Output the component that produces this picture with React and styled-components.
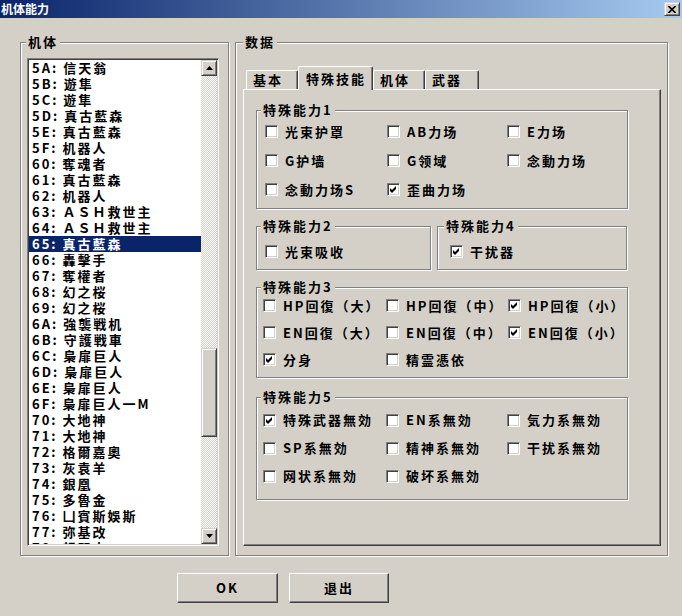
import styled, { createGlobalStyle } from "styled-components"

const GlobalStyle = createGlobalStyle`
    body {
        margin: 0;
        overflow: hidden;
        background: #d4d0c8;
    }
`

const Page = styled.div`
    display: flex;
    flex-direction: column;
    width: 682px;
    height: 616px;
    background: #d4d0c8;
    color: #000;
    font-family: "Noto Sans CJK SC", "Liberation Sans", sans-serif;
    font-weight: 700;
    font-size: 13px;
    line-height: 16px;
    letter-spacing: 2px;
`

const TitleBar = styled.div`
    display: flex;
    align-items: center;
    justify-content: space-between;
    height: 18px;
    padding: 0 2px 0 1px;
    background: linear-gradient(to right, #0a246a, #a6caf0);
    color: #fff;
    font-size: 12px;
    letter-spacing: 0;
`

const raised = `
    border: 1px solid;
    border-color: #d4d0c8 #404040 #404040 #d4d0c8;
    box-shadow: inset 1px 1px #fff, inset -1px -1px #808080;
    background: #d4d0c8;
`

const CloseBtn = styled.div`
    ${raised}
    box-sizing: border-box;
    display: flex;
    align-items: center;
    justify-content: center;
    width: 16px;
    height: 14px;
`

const Main = styled.div`
    display: flex;
    gap: 6px;
    padding: 24px 0 0 20px;
`

const GroupBox = styled.div`
    position: relative;
    box-sizing: border-box;
    width: ${p => p.$w}px;
    height: ${p => p.$h}px;
    margin-top: ${p => p.$mt || 0}px;
    border: 1px solid #808080;
    box-shadow: inset 1px 1px #fff, 1px 1px #fff;
    padding: ${p => p.$pad || "0"};
    flex-shrink: 0;
`

const Legend = styled.span`
    position: absolute;
    top: -9px;
    left: ${p => p.$lx}px;
    padding: 0 2px;
    background: #d4d0c8;
    line-height: 16px;
`

const ListBox = styled.div`
    box-sizing: border-box;
    display: flex;
    width: 192px;
    height: 488px;
    border: 1px solid;
    border-color: #808080 #fff #fff #808080;
    box-shadow: inset 1px 1px #404040, inset -1px -1px #d4d0c8;
    background: #fff;
    padding: 1px;
`

const Rows = styled.div`
    flex: 1;
    display: flex;
    flex-direction: column;
    overflow: hidden;
`

const Row = styled.div`
    flex-shrink: 0;
    height: 16px;
    line-height: 16px;
    padding-left: 3px;
    white-space: nowrap;
    background: ${p => (p.$sel ? "#0a246a" : "transparent")};
    color: ${p => (p.$sel ? "#fff" : "#000")};
`

const ScrollBar = styled.div`
    display: flex;
    flex-direction: column;
    width: 16px;
    flex-shrink: 0;
`

const ScrollBtn = styled.div`
    ${raised}
    box-sizing: border-box;
    display: flex;
    align-items: center;
    justify-content: center;
    height: 16px;
    flex-shrink: 0;
`

const Track = styled.div`
    flex: 1;
    display: flex;
    flex-direction: column;
    background: repeating-conic-gradient(#fff 0 25%, #d4d0c8 0 50%) 0 0 / 2px 2px;
`

const Thumb = styled.div`
    ${raised}
    box-sizing: border-box;
    height: 89px;
    margin-top: 272px;
`

const TabStrip = styled.div`
    position: relative;
    z-index: 1;
    display: flex;
    align-items: flex-end;
    height: 23px;
    padding-left: 3px;
`

const Tab = styled.div`
    position: relative;
    z-index: ${p => (p.$sel ? 2 : 1)};
    box-sizing: border-box;
    display: flex;
    align-items: center;
    width: ${p => p.$w}px;
    height: ${p => (p.$sel ? 24 : 19)}px;
    margin: ${p => (p.$sel ? "0 0 -1px" : "0")};
    padding-left: ${p => (p.$sel ? 7 : 6)}px;
    border-left: 1px solid #fff;
    border-top: 1px solid #fff;
    border-right: 1px solid #404040;
    box-shadow: inset -1px 0 #808080;
    border-radius: 2px 2px 0 0;
    background: #d4d0c8;
    white-space: nowrap;
`

const Panel = styled.div`
    box-sizing: border-box;
    display: flex;
    flex-direction: column;
    width: 418px;
    height: 457px;
    border: 1px solid;
    border-color: #fff #404040 #404040 #fff;
    box-shadow: inset -1px -1px #808080;
    padding: 20px 0 0 12px;
`

const GroupRow = styled.div`
    display: flex;
    gap: 6px;
    margin-top: 17px;
`

const CheckGrid = styled.div`
    display: grid;
    grid-template-columns: ${p => p.$cols || "122px 121px auto"};
    grid-auto-rows: ${p => p.$rowH}px;
    padding: ${p => p.$pt}px 0 0 ${p => p.$pl}px;
`

const CheckItem = styled.label`
    display: flex;
    align-items: center;
    gap: 7px;
    white-space: nowrap;
`

const Box = styled.span`
    box-sizing: border-box;
    display: flex;
    align-items: center;
    justify-content: center;
    width: 13px;
    height: 13px;
    flex-shrink: 0;
    border: 1px solid;
    border-color: #808080 #fff #fff #808080;
    box-shadow: inset 1px 1px #404040, inset -1px -1px #d4d0c8;
    background: #fff;
`

const ButtonRow = styled.div`
    display: flex;
    gap: 11px;
    margin-top: 17px;
    padding-left: 177px;
`

const PushButton = styled.div`
    box-sizing: border-box;
    display: flex;
    align-items: center;
    justify-content: center;
    width: ${p => p.$w}px;
    height: 30px;
    border: 1px solid;
    border-color: #fff #404040 #404040 #fff;
    box-shadow: inset -1px -1px #808080;
    background: #d4d0c8;
`

const items = [
    "5A: 信天翁", "5B: 遊隼", "5C: 遊隼", "5D: 真古藍森", "5E: 真古藍森",
    "5F: 机器人", "60: 奪魂者", "61: 真古藍森", "62: 机器人", "63: ＡＳＨ救世主",
    "64: ＡＳＨ救世主", "65: 真古藍森", "66: 轟擊手", "67: 奪權者", "68: 幻之桜",
    "69: 幻之桜", "6A: 強襲戦机", "6B: 守護戦車", "6C: 梟扉巨人", "6D: 梟扉巨人",
    "6E: 梟扉巨人", "6F: 梟扉巨人一M", "70: 大地神", "71: 大地神", "72: 格爾嘉奧",
    "73: 灰袁羊", "74: 銀凰", "75: 多魯金", "76: 凵賓斯娛斯", "77: 弥基改",
    "78: 超闘士"
]

const tabs = [
    { name: "基本", w: 52 },
    { name: "特殊技能", w: 75, sel: true },
    { name: "机体", w: 52 },
    { name: "武器", w: 54 },
]

function Check({ label, on }) {
    return (
        <CheckItem>
            <Box>
                {on && (
                    <svg width="7" height="7" viewBox="0 0 7 7">
                        <path d="M0 2 L2 4 L6 0 L6 3 L2 7 L0 5 Z" fill="#000" />
                    </svg>
                )}
            </Box>
            {label}
        </CheckItem>
    )
}

function Arrow({ down }) {
    return (
        <svg width="7" height="4" viewBox="0 0 7 4">
            <path d={down ? "M0 0 H7 L3.5 4 Z" : "M0 4 H7 L3.5 0 Z"} fill="#000" />
        </svg>
    )
}

export default function App() {
    return (
        <Page>
            <GlobalStyle />
            <TitleBar>
                <span>机体能力</span>
                <CloseBtn>
                    <svg width="8" height="7" viewBox="0 0 8 7">
                        <path d="M0.5 0 L7.5 7 M7.5 0 L0.5 7" stroke="#000" strokeWidth="1.6" />
                    </svg>
                </CloseBtn>
            </TitleBar>

            <Main>
                <GroupBox $w={209} $h={514} $pad="15px 0 0 6px">
                    <Legend $lx={5}>机体</Legend>
                    <ListBox>
                        <Rows>
                            {items.map(it => (
                                <Row key={it} $sel={it.startsWith("65")}>{it}</Row>
                            ))}
                        </Rows>
                        <ScrollBar>
                            <ScrollBtn><Arrow /></ScrollBtn>
                            <Track><Thumb /></Track>
                            <ScrollBtn><Arrow down /></ScrollBtn>
                        </ScrollBar>
                    </ListBox>
                </GroupBox>

                <GroupBox $w={433} $h={514} $pad="23px 0 0 7px">
                    <Legend $lx={7}>数据</Legend>
                    <TabStrip>
                        {tabs.map(t => (
                            <Tab key={t.name} $w={t.w} $sel={t.sel}>{t.name}</Tab>
                        ))}
                    </TabStrip>
                    <Panel>
                        <GroupBox $w={372} $h={99}>
                            <Legend $lx={4}>特殊能力1</Legend>
                            <CheckGrid $rowH={29} $pt={6} $pl={8} $cols="122px 120px auto">
                                <Check label="光束护罩" />
                                <Check label="AB力场" />
                                <Check label="E力场" />
                                <Check label="G护墙" />
                                <Check label="G领域" />
                                <Check label="念動力场" />
                                <Check label="念動力场S" />
                                <Check label="歪曲力场" on />
                            </CheckGrid>
                        </GroupBox>

                        <GroupRow>
                            <GroupBox $w={175} $h={44}>
                                <Legend $lx={4}>特殊能力2</Legend>
                                <CheckGrid $rowH={29} $pt={10} $pl={8}>
                                    <Check label="光束吸收" />
                                </CheckGrid>
                            </GroupBox>
                            <GroupBox $w={190} $h={44}>
                                <Legend $lx={6}>特殊能力4</Legend>
                                <CheckGrid $rowH={29} $pt={10} $pl={12}>
                                    <Check label="干扰器" on />
                                </CheckGrid>
                            </GroupBox>
                        </GroupRow>

                        <GroupBox $w={372} $h={91} $mt={17}>
                            <Legend $lx={4}>特殊能力3</Legend>
                            <CheckGrid $rowH={27} $pt={4} $pl={6} $cols="123px 122px auto">
                                <Check label="HP回復（大）" />
                                <Check label="HP回復（中）" />
                                <Check label="HP回復（小）" on />
                                <Check label="EN回復（大）" />
                                <Check label="EN回復（中）" />
                                <Check label="EN回復（小）" on />
                                <Check label="分身" on />
                                <Check label="精霊憑依" />
                            </CheckGrid>
                        </GroupBox>

                        <GroupBox $w={372} $h={103} $mt={19}>
                            <Legend $lx={4}>特殊能力5</Legend>
                            <CheckGrid $rowH={28} $pt={8} $pl={6} $cols="123px 121px auto">
                                <Check label="特殊武器無効" on />
                                <Check label="EN系無効" />
                                <Check label="気力系無効" />
                                <Check label="SP系無効" />
                                <Check label="精神系無効" />
                                <Check label="干扰系無効" />
                                <Check label="网状系無効" />
                                <Check label="破坏系無効" />
                            </CheckGrid>
                        </GroupBox>
                    </Panel>
                </GroupBox>
            </Main>

            <ButtonRow>
                <PushButton $w={101}>OK</PushButton>
                <PushButton $w={100}>退出</PushButton>
            </ButtonRow>
        </Page>
    )
}
